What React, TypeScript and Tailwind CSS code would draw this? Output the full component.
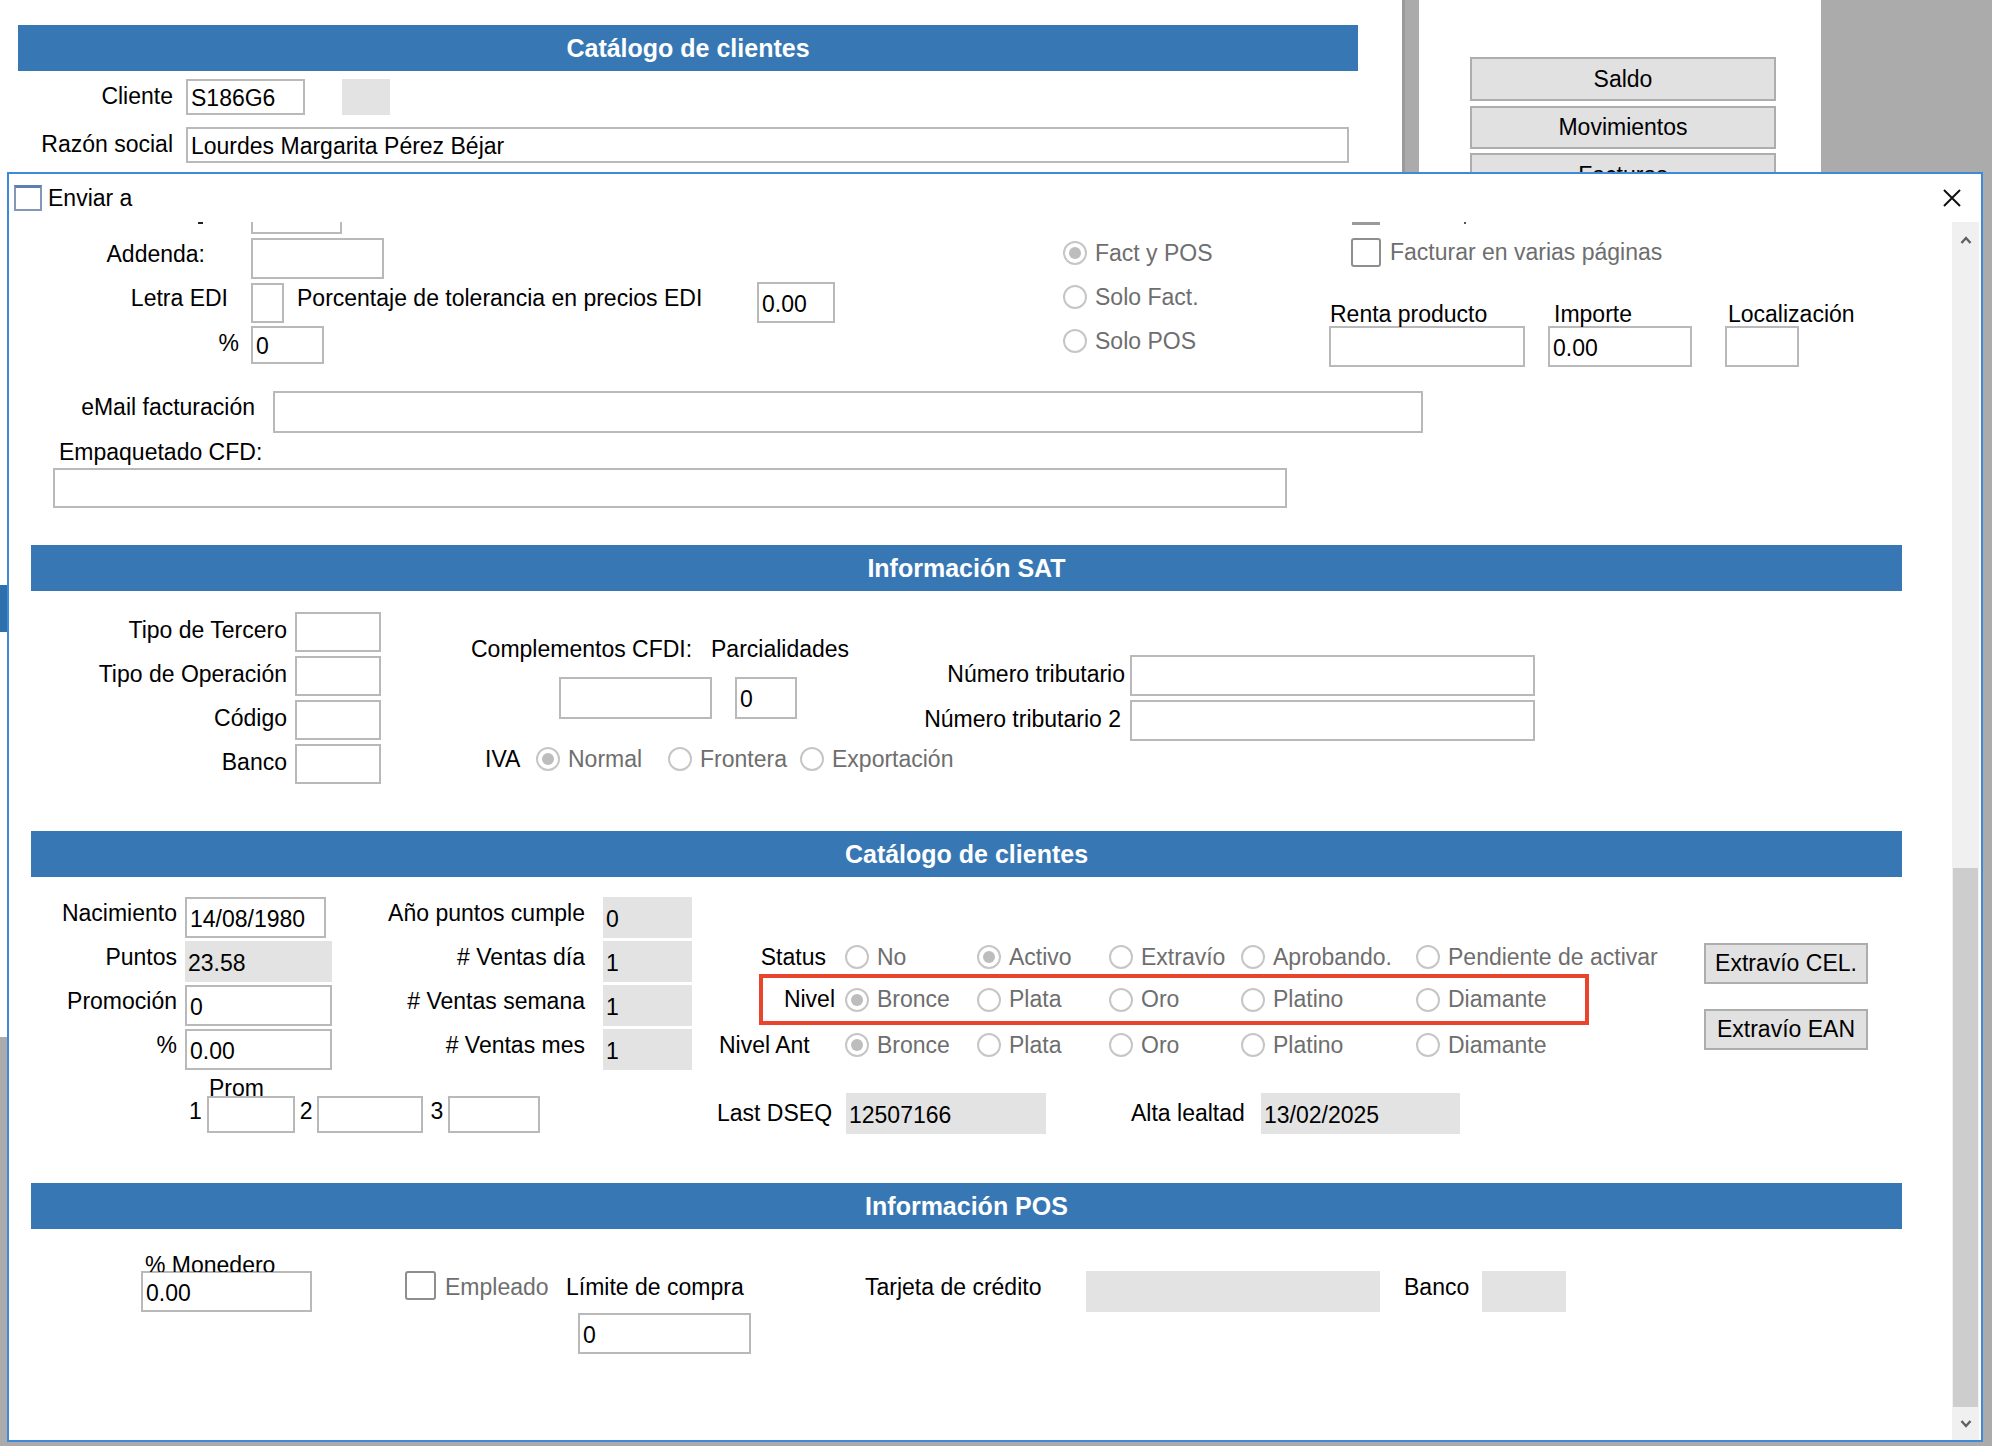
import React from "react";

const radioWidths = ["w-[132px]", "w-[132px]", "w-[132px]", "w-[175px]", ""];

function Field({ className, value, gray }: { className: string; value?: string; gray?: boolean }) {
    return (
        <div className={`${className} shrink-0 flex items-center pl-[3px] pt-[3px] ${gray ? "bg-[#e3e3e3]" : "bg-white border-2 border-[#b9b9b9]"}`}>
            {value}
        </div>
    );
}

function Radio({ label, checked, className }: { label: string; checked?: boolean; className?: string }) {
    return (
        <div className={`flex items-center shrink-0 ${className ?? ""}`}>
            <div className="w-[24px] h-[24px] shrink-0 rounded-full border-2 border-[#c6c6c6] bg-white flex items-center justify-center">
                {checked && <div className="w-[12px] h-[12px] rounded-full bg-[#bdbdbd]" />}
            </div>
            <span className="ml-[8px] text-[#6e6e6e] whitespace-nowrap">{label}</span>
        </div>
    );
}

function RadioRow({ items, checked }: { items: string[]; checked: number }) {
    return (
        <div className="flex items-center">
            {items.map((it, i) => (
                <Radio key={it} label={it} checked={i === checked} className={radioWidths[i]} />
            ))}
        </div>
    );
}

function CheckBox({ className }: { className: string }) {
    return <div className={`${className} shrink-0 rounded-[3px] border-2 border-[#8e8e8e] bg-white`} />;
}

function SectionHeader({ title, className }: { title: string; className: string }) {
    return (
        <div className={`${className} ml-[22px] w-[1871px] h-[46px] shrink-0 bg-[#3778b4] flex items-center justify-center text-white font-bold text-[25px]`}>
            {title}
        </div>
    );
}

function Button({ label, className }: { label: string; className: string }) {
    return (
        <div className={`${className} shrink-0 bg-[#e1e1e1] border-2 border-[#adadad] flex items-center justify-center`}>
            {label}
        </div>
    );
}

function MainWindow() {
    return (
        <div className="flex h-[1442px]">
            <div className="w-[1402px] bg-white flex">
                <div className="w-[7px] flex flex-col">
                    <div className="h-[585px] bg-white" />
                    <div className="h-[47px] bg-[#2e6fae]" />
                    <div className="h-[405px] bg-white" />
                    <div className="flex-1 bg-[#ababab]" />
                </div>
                <div className="flex-1 flex flex-col">
                    <div className="ml-[11px] mt-[25px] w-[1340px] h-[46px] bg-[#3778b4] flex items-center justify-center text-white font-bold text-[25px]">
                        Catálogo de clientes
                    </div>
                    <div className="mt-[8px] h-[36px] flex items-center">
                        <div className="w-[166px] text-right mb-[2px]">Cliente</div>
                        <Field className="ml-[13px] w-[119px] h-[36px]" value="S186G6" />
                        <div className="ml-[37px] w-[48px] h-[36px] bg-[#e3e3e3]" />
                    </div>
                    <div className="mt-[12px] h-[36px] flex items-center">
                        <div className="w-[166px] text-right mb-[2px]">Razón social</div>
                        <Field className="ml-[13px] w-[1163px] h-[36px]" value="Lourdes Margarita Pérez Béjar" />
                    </div>
                </div>
            </div>
            <div className="w-[17px] bg-[#ababab] border-l-[3px] border-[#9a9a9a]" />
            <div className="w-[402px] bg-white flex flex-col pl-[51px]">
                <Button label="Saldo" className="mt-[57px] w-[306px] h-[44px]" />
                <Button label="Movimientos" className="mt-[5px] w-[306px] h-[43px]" />
                <Button label="Facturas" className="mt-[4px] w-[306px] h-[44px]" />
            </div>
            <div className="flex-1 bg-[#ababab]" />
        </div>
    );
}

function TopGroup() {
    return (
        <>
            <div className="h-[12px] flex shrink-0">
                <div className="ml-[189px] w-[5px] h-[2px] bg-[#222]" />
                <div className="ml-[48px] w-[91px] h-[12px] border-2 border-t-0 border-[#b9b9b9]" />
                <div className="ml-[1010px] w-[28px] h-[3px] bg-[#9a9a9a]" />
                <div className="ml-[84px] w-[2px] h-[2px] bg-[#555]" />
            </div>
            <div className="flex shrink-0">
                <div className="w-[1054px] pt-[4px]">
                    <div className="h-[41px] flex items-center">
                        <div className="w-[196px] text-right mb-[8px]">Addenda:</div>
                        <Field className="ml-[46px] w-[133px] h-[41px]" />
                    </div>
                    <div className="mt-[3px] h-[41px] flex items-center">
                        <div className="w-[219px] text-right mb-[8px]">Letra EDI</div>
                        <Field className="ml-[23px] w-[33px] h-[40px]" />
                        <div className="ml-[13px] w-[460px] mb-[8px] whitespace-nowrap">Porcentaje de tolerancia en precios EDI</div>
                        <Field className="w-[78px] h-[41px]" value="0.00" />
                    </div>
                    <div className="mt-[3px] h-[38px] flex items-center">
                        <div className="w-[230px] text-right mb-[4px]">%</div>
                        <Field className="ml-[12px] w-[73px] h-[38px]" value="0" />
                    </div>
                </div>
                <div className="w-[266px] -mt-[3px]">
                    <div className="h-[44px] flex items-center"><Radio label="Fact y POS" checked /></div>
                    <div className="h-[44px] flex items-center"><Radio label="Solo Fact." /></div>
                    <div className="h-[44px] flex items-center"><Radio label="Solo POS" /></div>
                </div>
                <div className="mt-[4px]">
                    <div className="ml-[22px] h-[29px] flex items-center">
                        <CheckBox className="w-[30px] h-[29px]" />
                        <span className="ml-[9px] text-[#6e6e6e] whitespace-nowrap">Facturar en varias páginas</span>
                    </div>
                    <div className="mt-[36px] flex">
                        <div className="w-[196px]">
                            <div className="h-[23px] leading-[23px] pl-[1px] whitespace-nowrap">Renta producto</div>
                            <Field className="w-[196px] h-[41px]" />
                        </div>
                        <div className="ml-[23px] w-[144px]">
                            <div className="h-[23px] leading-[23px] pl-[6px] whitespace-nowrap">Importe</div>
                            <Field className="w-[144px] h-[41px]" value="0.00" />
                        </div>
                        <div className="ml-[33px] w-[74px]">
                            <div className="h-[23px] leading-[23px] pl-[3px] whitespace-nowrap">Localización</div>
                            <Field className="w-[74px] h-[41px]" />
                        </div>
                    </div>
                </div>
            </div>
            <div className="mt-[24px] h-[42px] flex items-center shrink-0">
                <div className="w-[246px] text-right mb-[10px]">eMail facturación</div>
                <Field className="ml-[18px] w-[1150px] h-[42px]" />
            </div>
            <div className="mt-[6px] h-[26px] leading-[26px] pl-[50px] shrink-0">Empaquetado CFD:</div>
            <Field className="mt-[3px] ml-[44px] w-[1234px] h-[40px]" />
        </>
    );
}

function SatSection() {
    const rows = ["Tipo de Tercero", "Tipo de Operación", "Código", "Banco"];
    return (
        <div className="mt-[21px] flex shrink-0">
            <div className="w-[373px] shrink-0 flex flex-col gap-[4px]">
                {rows.map((r) => (
                    <div key={r} className="h-[40px] flex items-center">
                        <div className="w-[278px] text-right mb-[4px]">{r}</div>
                        <Field className="ml-[8px] w-[86px] h-[40px]" />
                    </div>
                ))}
            </div>
            <div className="ml-[89px] w-[439px] shrink-0">
                <div className="mt-[24px] h-[26px] leading-[26px] flex whitespace-nowrap">
                    <span className="w-[240px] shrink-0">Complementos CFDI:</span>
                    <span>Parcialidades</span>
                </div>
                <div className="mt-[15px] flex">
                    <Field className="ml-[88px] w-[153px] h-[42px]" />
                    <Field className="ml-[23px] w-[62px] h-[42px]" value="0" />
                </div>
                <div className="mt-[27px] h-[26px] flex items-center pl-[14px]">
                    <span className="w-[51px] shrink-0">IVA</span>
                    <Radio label="Normal" checked className="w-[132px]" />
                    <Radio label="Frontera" className="w-[132px]" />
                    <Radio label="Exportación" />
                </div>
            </div>
            <div className="mt-[43px]">
                <div className="h-[41px] flex items-center">
                    <div className="w-[215px] text-right mb-[2px]">Número tributario</div>
                    <Field className="ml-[5px] w-[405px] h-[41px]" />
                </div>
                <div className="mt-[4px] h-[41px] flex items-center">
                    <div className="w-[215px] text-right pr-[4px] mb-[2px] whitespace-nowrap">Número tributario 2</div>
                    <Field className="ml-[5px] w-[405px] h-[41px]" />
                </div>
            </div>
        </div>
    );
}

function ClientSection() {
    const rows = [
        { l: "Nacimiento", v: "14/08/1980", w: "w-[141px]", gray: false, l2: "Año puntos cumple", v2: "0" },
        { l: "Puntos", v: "23.58", w: "w-[147px]", gray: true, l2: "# Ventas día", v2: "1" },
        { l: "Promoción", v: "0", w: "w-[147px]", gray: false, l2: "# Ventas semana", v2: "1" },
        { l: "%", v: "0.00", w: "w-[147px]", gray: false, l2: "# Ventas mes", v2: "1" },
    ];
    const status = ["No", "Activo", "Extravío", "Aprobando.", "Pendiente de activar"];
    const nivel = ["Bronce", "Plata", "Oro", "Platino", "Diamante"];
    return (
        <div className="mt-[20px] flex shrink-0">
            <div className="w-[691px] shrink-0">
                <div className="flex flex-col gap-[3px]">
                    {rows.map((r) => (
                        <div key={r.l2} className="h-[41px] flex items-center">
                            <div className="w-[168px] text-right mb-[8px]">{r.l}</div>
                            <div className="ml-[8px] w-[147px] h-[41px]">
                                <Field className={`${r.w} h-[41px]`} value={r.v} gray={r.gray} />
                            </div>
                            <div className="w-[253px] text-right mb-[8px] whitespace-nowrap">{r.l2}</div>
                            <Field className="ml-[18px] w-[89px] h-[41px]" value={r.v2} gray />
                        </div>
                    ))}
                </div>
                <div className="mt-[5px] h-[21px] overflow-hidden pl-[200px] leading-[26px]">Prom</div>
                <div className="h-[37px] flex items-center pl-[180px]">
                    <span className="mb-[6px]">1</span>
                    <Field className="ml-[5px] w-[88px] h-[37px]" />
                    <span className="ml-[5px] mb-[6px]">2</span>
                    <Field className="ml-[4px] w-[106px] h-[37px]" />
                    <span className="ml-[8px] mb-[6px]">3</span>
                    <Field className="ml-[5px] w-[92px] h-[37px]" />
                </div>
            </div>
            <div className="w-[1004px] shrink-0 pt-[43px]">
                <div className="h-[34px] flex items-center">
                    <div className="w-[126px] text-right">Status</div>
                    <div className="ml-[19px]"><RadioRow items={status} checked={1} /></div>
                </div>
                <div className="ml-[59px] w-[830px] h-[51px] border-4 border-[#e8452c] flex items-center">
                    <div className="w-[72px] text-right">Nivel</div>
                    <div className="ml-[10px]"><RadioRow items={nivel} checked={0} /></div>
                </div>
                <div className="h-[40px] flex items-center">
                    <div className="w-[126px] pl-[19px] whitespace-nowrap">Nivel Ant</div>
                    <div className="ml-[19px]"><RadioRow items={nivel} checked={0} /></div>
                </div>
                <div className="mt-[28px] h-[41px] flex items-center">
                    <div className="w-[146px] pl-[17px] whitespace-nowrap">Last DSEQ</div>
                    <Field className="w-[200px] h-[41px]" value="12507166" gray />
                    <div className="ml-[85px] w-[130px] whitespace-nowrap">Alta lealtad</div>
                    <Field className="w-[199px] h-[41px]" value="13/02/2025" gray />
                </div>
            </div>
            <div className="pt-[46px]">
                <Button label="Extravío CEL." className="w-[164px] h-[41px]" />
                <Button label="Extravío EAN" className="mt-[25px] w-[164px] h-[41px]" />
            </div>
        </div>
    );
}

function PosSection() {
    return (
        <div className="mt-[23px] flex items-start shrink-0">
            <div className="ml-[132px] shrink-0">
                <div className="h-[20px] overflow-hidden pl-[4px] leading-[26px] whitespace-nowrap">% Monedero</div>
                <Field className="-mt-[1px] w-[171px] h-[41px]" value="0.00" />
            </div>
            <div className="ml-[93px] mt-[19px] w-[161px] shrink-0 flex items-center">
                <CheckBox className="w-[31px] h-[29px]" />
                <span className="ml-[9px] text-[#6e6e6e] mt-[4px]">Empleado</span>
            </div>
            <div className="w-[185px] shrink-0">
                <div className="mt-[22px] h-[26px] leading-[26px] whitespace-nowrap">Límite de compra</div>
                <Field className="mt-[13px] ml-[12px] w-[173px] h-[41px]" value="0" />
            </div>
            <div className="ml-[114px] flex items-start">
                <div className="mt-[22px] w-[221px] shrink-0 leading-[26px] whitespace-nowrap">Tarjeta de crédito</div>
                <Field className="mt-[19px] w-[294px] h-[41px]" gray />
                <div className="ml-[24px] mt-[22px] w-[78px] shrink-0 leading-[26px]">Banco</div>
                <Field className="mt-[19px] w-[84px] h-[41px]" gray />
            </div>
        </div>
    );
}

function Dialog() {
    return (
        <div className="absolute left-[7px] top-[172px] w-[1976px] h-[1270px] border-2 border-[#3f8ad8] bg-white flex flex-col">
            <div className="h-[48px] shrink-0 flex items-center pl-[5px]">
                <div className="w-[28px] h-[26px] border-2 border-[#8497b6] border-t-[3px] border-t-[#5d7fb5] bg-white" />
                <span className="ml-[6px]">Enviar a</span>
                <svg className="ml-auto mr-[19px]" width="20" height="20" viewBox="0 0 20 20">
                    <path d="M2 2 L18 18 M18 2 L2 18" stroke="#111" strokeWidth="2" fill="none" />
                </svg>
            </div>
            <div className="flex-1 flex min-h-0">
                <div className="flex-1 flex flex-col overflow-hidden">
                    <TopGroup />
                    <SectionHeader title="Información SAT" className="mt-[37px]" />
                    <SatSection />
                    <SectionHeader title="Catálogo de clientes" className="mt-[47px]" />
                    <ClientSection />
                    <SectionHeader title="Información POS" className="mt-[49px]" />
                    <PosSection />
                </div>
                <div className="w-[27px] mr-[2px] bg-[#f0f0f0] flex flex-col">
                    <div className="h-[36px] flex items-center justify-center">
                        <svg width="12" height="8" viewBox="0 0 12 8">
                            <path d="M1.5 7 L6 2 L10.5 7" stroke="#606060" strokeWidth="2.4" fill="none" />
                        </svg>
                    </div>
                    <div className="h-[610px]" />
                    <div className="mx-[1px] h-[539px] bg-[#cdcdcd]" />
                    <div className="flex-1 flex items-center justify-center">
                        <svg width="12" height="8" viewBox="0 0 12 8">
                            <path d="M1.5 1 L6 6 L10.5 1" stroke="#606060" strokeWidth="2.4" fill="none" />
                        </svg>
                    </div>
                </div>
            </div>
        </div>
    );
}

export default function App() {
    return (
        <div className="relative w-[1992px] h-[1446px] overflow-hidden bg-[#ababab] text-black text-[23px] leading-none font-['Liberation_Sans',Arial,sans-serif]">
            <MainWindow />
            <Dialog />
        </div>
    );
}
